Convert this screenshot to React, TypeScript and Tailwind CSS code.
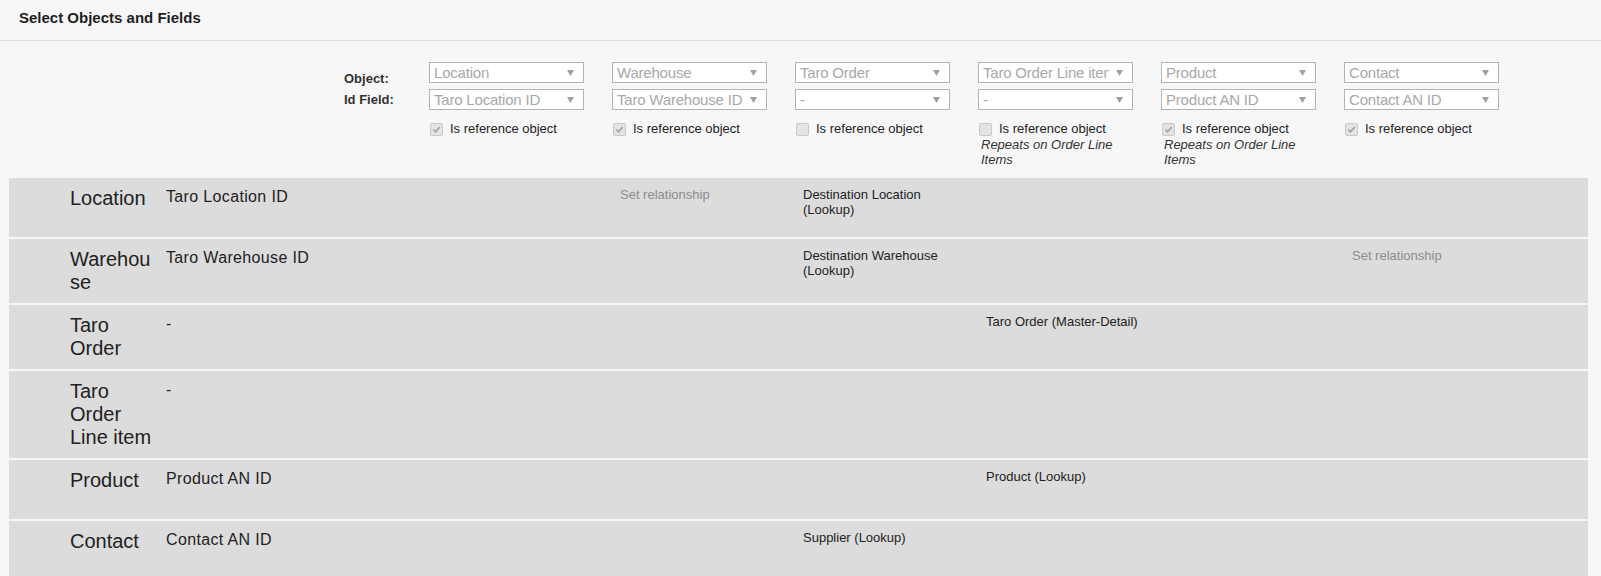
import React from "react";

type Column = {
  object: string;
  idField: string;
  isReference: boolean;
  repeats?: boolean;
};

type Cell = { text: string; muted?: boolean } | null;

type Row = {
  title: string;
  idField: string;
  cells: Cell[];
};

const columns: Column[] = [
  { object: "Location", idField: "Taro Location ID", isReference: true },
  { object: "Warehouse", idField: "Taro Warehouse ID", isReference: true },
  { object: "Taro Order", idField: "-", isReference: false },
  { object: "Taro Order Line item", idField: "-", isReference: false, repeats: true },
  { object: "Product", idField: "Product AN ID", isReference: true, repeats: true },
  { object: "Contact", idField: "Contact AN ID", isReference: true },
];

const rows: Row[] = [
  {
    title: "Location",
    idField: "Taro Location ID",
    cells: [null, { text: "Set relationship", muted: true }, { text: "Destination Location (Lookup)" }, null, null, null],
  },
  {
    title: "Warehouse",
    idField: "Taro Warehouse ID",
    cells: [null, null, { text: "Destination Warehouse (Lookup)" }, null, null, { text: "Set relationship", muted: true }],
  },
  {
    title: "Taro Order",
    idField: "-",
    cells: [null, null, null, { text: "Taro Order (Master-Detail)" }, null, null],
  },
  {
    title: "Taro Order Line item",
    idField: "-",
    cells: [null, null, null, null, null, null],
  },
  {
    title: "Product",
    idField: "Product AN ID",
    cells: [null, null, null, { text: "Product (Lookup)" }, null, null],
  },
  {
    title: "Contact",
    idField: "Contact AN ID",
    cells: [null, null, { text: "Supplier (Lookup)" }, null, null, null],
  },
];

function FakeSelect({ value }: { value: string }) {
  return (
    <div className="relative w-[155px] h-[21px] bg-white border border-[#b4b4b4] flex items-center">
      <div className="w-[130px] pl-[4px] overflow-hidden whitespace-nowrap text-[15px] leading-[19px] tracking-[-0.2px] text-[#a8a8a8]">
        {value}
      </div>
      {/* arrow */}
      <svg className="absolute right-[9px] top-[7px] w-[7px] h-[6px]" viewBox="0 0 7 6">
        <path d="M0 0h7L3.5 6z" fill="#a0a0a0" />
      </svg>
    </div>
  );
}

function DisabledCheckbox({ checked }: { checked: boolean }) {
  return (
    <span className="ml-[1px] w-[13px] h-[13px] rounded-[2px] border border-[#c9c9c9] bg-[#e4e4e4] flex items-center justify-center shrink-0">
      {checked && (
        <svg className="w-[9px] h-[9px]" viewBox="0 0 10 10">
          <path d="M1.5 5.2l2.4 2.4L8.6 2.4" fill="none" stroke="#a3a3a3" strokeWidth={1.8} />
        </svg>
      )}
    </span>
  );
}

export default function App() {
  return (
    <div className="min-h-screen bg-[#f7f7f7] font-['Liberation_Sans',Arial,sans-serif] text-[#222]">
      {/* Header */}
      <div className="h-[41px] border-b border-[#dddddd] pl-[19px] pt-[9px]">
        <h1 className="text-[15px] leading-[17px] font-bold text-[#1f1f1f]">Select Objects and Fields</h1>
      </div>

      {/* Object / field pickers */}
      <div className="flex pl-[344px] pt-[21px] pb-[11px]">
        <div className="w-[85px] pt-[6px] text-[13px] leading-[21px] font-bold text-[#333]">
          <div>Object:</div>
          <div>Id Field:</div>
        </div>
        {columns.map((col) => (
          <div key={col.object} className="w-[183px] flex flex-col">
            <FakeSelect value={col.object} />
            <div className="mt-[6px]">
              <FakeSelect value={col.idField} />
            </div>
            <div className="mt-[11px] flex items-center gap-[7px] h-[16px]">
              <DisabledCheckbox checked={col.isReference} />
              <span className="text-[13px] leading-[16px] text-[#222]">Is reference object</span>
            </div>
            <div className="w-[155px] pl-[3px] h-[30px] text-[13px] leading-[15px] italic text-[#333]">
              {col.repeats ? "Repeats on Order Line Items" : ""}
            </div>
          </div>
        ))}
      </div>

      {/* Relationship matrix */}
      <div className="ml-[9px] mr-[13px] flex flex-col gap-[2px]">
        {rows.map((row) => (
          <div key={row.title} className="flex items-start bg-[#dcdcdc] min-h-[59px] pt-[9px] pb-[9px] pl-[61px]">
            <div className="w-[96px] pr-[8px] text-[20px] leading-[23px] break-words text-[#222]">{row.title}</div>
            <div className="w-[263px] text-[16px] leading-[19px] tracking-[0.35px] text-[#222]">{row.idField}</div>
            {row.cells.map((cell, i) => (
              <div key={i} className="w-[183px] pl-[8px]">
                {cell && (
                  <div
                    className={`w-[160px] text-[13px] leading-[15px] ${
                      cell.muted ? "text-[#8c8c8c]" : "text-[#222]"
                    }`}
                  >
                    {cell.text}
                  </div>
                )}
              </div>
            ))}
          </div>
        ))}
      </div>
    </div>
  );
}
